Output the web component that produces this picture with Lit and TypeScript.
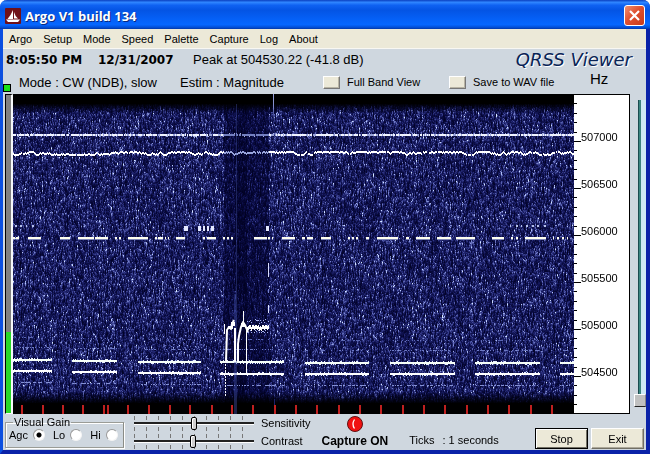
import { LitElement, html, css, svg } from "lit";
import { customElement, query } from "lit/decorators.js";

const MENU = ["Argo", "Setup", "Mode", "Speed", "Palette", "Capture", "Log", "About"];
const LABELS = ["507000", "506500", "506000", "505500", "505000", "504500"];

const PLOT_W = 561;
const PLOT_H = 320;

type Span = [number, number];

// Keyed carrier near 505.95 kHz: start and end of every mark.
const KEYING: Span[] = [
  [0, 2], [3, 6], [15, 28], [47, 57], [65, 81], [82, 95], [102, 104], [106, 108],
  [115, 135], [142, 144], [145, 150], [152, 153], [155, 156], [163, 172], [190, 192],
  [194, 203], [210, 212], [214, 216], [218, 220], [241, 254], [255, 257], [259, 260],
  [269, 282], [289, 292], [294, 300], [308, 318], [335, 337], [339, 341], [343, 345],
  [353, 356], [364, 385], [393, 396], [403, 417], [424, 438], [443, 462], [479, 491],
  [498, 500], [503, 505], [512, 533], [540, 541], [544, 546], [549, 551], [554, 555],
];
const UPPER_KEYING: Span[] = [
  [171, 175], [185, 188], [190, 192], [194, 196], [198, 201], [253, 256],
];
const FAINT_KEYING: Span[] = [
  [2, 4], [7, 9], [13, 14], [19, 21], [497, 498], [503, 505], [508, 509],
  [513, 515], [519, 521], [524, 526], [531, 533],
];
// Long dashes of the paired beacon: start, end, upper row, lower row.
const BEACON: [number, number, number, number][] = [
  [0, 39, 265, 276], [59, 104, 266, 277], [125, 188, 267, 278], [207, 271, 267, 279],
  [292, 356, 268, 279], [377, 442, 268, 279], [462, 527, 268, 279], [547, 561, 268, 279],
];
const TIME_TICKS = [
  8, 29, 49, 69, 90, 94, 114, 135, 156, 176, 198, 218, 239, 261,
  282, 303, 325, 346, 367, 389, 410, 431, 453, 474, 495, 517, 538,
];

function randomSource(seed: number) {
  return () => {
    seed = (seed + 0x6d2b79f5) | 0;
    let t = Math.imul(seed ^ (seed >>> 15), 1 | seed);
    t = (t + Math.imul(t ^ (t >>> 7), 61 | t)) ^ t;
    return ((t ^ (t >>> 14)) >>> 0) / 4294967296;
  };
}

@customElement("argo-waterfall")
export class ArgoWaterfall extends LitElement {
  static styles = css`
    :host { display: block; background: #000; min-width: 0; min-height: 0; contain: size; }
    .plot { display: block; width: 100%; height: 100%; }
  `;

  @query(".plot") canvas!: HTMLCanvasElement;

  firstUpdated() {
    const ctx = this.canvas.getContext("2d")!;
    const rnd = randomSource(1234);
    this.paintNoise(ctx, rnd);
    this.paintSignals(ctx, rnd);
  }

  private paintNoise(ctx: CanvasRenderingContext2D, rnd: () => number) {
    const image = ctx.createImageData(PLOT_W, PLOT_H);
    const previous = new Float32Array(PLOT_W);
    for (let y = 0; y < PLOT_H; y++) {
      const top = Math.min(1, Math.max(0, (y - 9) / 10));
      const bottom = Math.min(1, Math.max(0, (309 - y) / 12));
      const edge = top * bottom;
      for (let x = 0; x < PLOT_W; x++) {
        const fresh = -Math.log(1 - rnd() * 0.998) * 0.3;
        const level = previous[x] * 0.5 + fresh * 0.54;
        previous[x] = level;
        let gain = edge;
        if (x >= 211 && x < 256) gain *= x > 222 && x < 234 ? 0.35 : 0.55;
        const v = Math.min(1.1, level) * gain;
        const i = (y * PLOT_W + x) * 4;
        image.data[i] = v * v * 150 + v * 32;
        image.data[i + 1] = v * v * 155 + v * 42;
        image.data[i + 2] = edge * 28 + v * 220;
        image.data[i + 3] = 255;
      }
    }
    ctx.putImageData(image, 0, 0);
  }

  private paintSignals(ctx: CanvasRenderingContext2D, rnd: () => number) {
    const dot = (x: number, y: number, w: number, h: number, color: string) => {
      ctx.fillStyle = color;
      ctx.fillRect(x, y, w, h);
    };

    let drift = 0;
    for (let x = 0; x < PLOT_W; x++) {
      const dim = x >= 211 && x < 256;
      const a = rnd();
      if (a > 0.06) dot(x, 40, 1, 2, dim ? "#7480c0" : a > 0.3 ? "#f0f3ff" : "#98a2d8");
      if (rnd() > 0.85) dot(x, rnd() > 0.5 ? 39 : 42, 1, 1, "#a4aee0");
      drift = Math.max(-1, Math.min(2, drift + Math.round((rnd() - 0.5) * 3)));
      if (rnd() > 0.04) dot(x, 58 + drift, 1, 2, dim ? "#98a4dc" : "#fff");
    }

    for (const [a, b] of KEYING) {
      dot(a, 143, b - a, 2, "#fffff0");
      dot(a, 145, b - a, 1, "#8088b8");
    }
    for (const [a, b] of UPPER_KEYING) dot(a, 132, b - a, 5, "#e4e8ff");
    for (const [a, b] of FAINT_KEYING) dot(a, 131, b - a, 2, "#b5c0e8");

    for (const [a, b, upper, lower] of BEACON) {
      dot(a, upper, b - a, 2, "#f6fff8");
      dot(a, lower, b - a, 2, "#fff");
      for (let x = a; x < b; x++) {
        if (rnd() > 0.6) dot(x, upper + (rnd() > 0.5 ? 2 : -1), 1, 1, "#e8efff");
        if (rnd() > 0.6) dot(x, lower + (rnd() > 0.5 ? 2 : -1), 1, 1, "#e8efff");
        if (rnd() > 0.6) dot(x, upper - 12, 1, 1, "#6c78c4");
        if (rnd() > 0.45) dot(x, lower + 12, 1, 1, "#8490d4");
        if (rnd() > 0.75) dot(x, upper - 22, 1, 1, "#5a66b4");
      }
    }

    // Interference bursts that span the whole band.
    dot(223, 10, 1, 310, "rgba(70,84,170,0.4)");
    dot(221, 200, 2, 120, "rgba(70,84,180,0.4)");
    const burst = ctx.createLinearGradient(0, 0, 0, 30);
    burst.addColorStop(0, "#9aa4dc");
    burst.addColorStop(0.45, "#7d88cc");
    burst.addColorStop(1, "rgba(60,70,150,0)");
    ctx.fillStyle = burst;
    ctx.fillRect(260, 0, 1, 30);
    dot(261, 305, 1, 15, "#1c226c");
    dot(255, 169, 1, 14, "#d8dcff");
    dot(255, 195, 1, 4, "#7884cc");
    dot(255, 211, 1, 8, "#dfe3ff");

    // Tuning sweep.
    ctx.strokeStyle = "#fff";
    ctx.lineWidth = 2;
    ctx.lineJoin = "round";
    ctx.beginPath();
    ctx.moveTo(213, 268); ctx.lineTo(214, 236); ctx.lineTo(216, 233); ctx.lineTo(218, 235);
    ctx.lineTo(219, 230); ctx.lineTo(221, 226);
    ctx.moveTo(222, 268); ctx.lineTo(222, 234);
    ctx.moveTo(225, 268); ctx.lineTo(225, 250); ctx.lineTo(226, 242); ctx.lineTo(228, 233);
    ctx.lineTo(230, 228); ctx.lineTo(232, 231); ctx.lineTo(235, 238);
    ctx.stroke();
    ctx.lineWidth = 1;
    ctx.beginPath();
    ctx.moveTo(230.5, 232); ctx.lineTo(230.5, 217);
    ctx.moveTo(211.5, 230); ctx.lineTo(211.5, 240);
    ctx.moveTo(233.5, 236); ctx.lineTo(233.5, 281);
    ctx.stroke();
    dot(215, 232, 5, 3, "#fff");
    dot(218, 228, 4, 4, "#fff");
    dot(228, 229, 4, 4, "#fff");
    for (let y = 264; y < 302; y += 3) dot(212, y, 1, 2, "#f4f6ff");
    for (let x = 234; x < 256; x++) {
      const y = 232 + Math.round((rnd() - 0.5) * 3);
      dot(x, y, 1, 4, "#fff");
      if (rnd() > 0.3) dot(x, y - 4 - Math.floor(rnd() * 3), 1, 1, "#a4b0ee");
      if (rnd() > 0.4) dot(x, y + 5 + Math.floor(rnd() * 2), 1, 1, "#a4b0ee");
    }

    for (const x of TIME_TICKS) dot(x, 311, 2, 9, "#c02020");
  }

  render() {
    return html`<canvas class="plot" width=${PLOT_W} height=${PLOT_H} role="img" aria-label="Spectrum waterfall"></canvas>`;
  }
}

@customElement("argo-scale")
export class ArgoScale extends LitElement {
  static styles = css`
    :host {
      display: flex; flex-direction: column; background: #fff; color: #000;
      border: 1px solid #000; border-left: 0; font-size: 11px; line-height: 12px;
    }
    .band { flex: 47 1 0; min-height: 0; display: grid; grid-template-columns: 7px 1fr; }
    .rest { flex: 36 1 0; }
    .ticks { display: flex; flex-direction: column; min-height: 0; }
    .tick { flex: 1 1 0; width: 3px; border-bottom: 1px solid #000; box-sizing: border-box; }
    .major { width: 7px; }
    .blank { border-bottom: 0; }
    .label { align-self: end; margin-bottom: -1px; }
  `;

  render() {
    return html`
      ${LABELS.map((label) => html`
        <div class="band">
          <div class="ticks">
            ${[0, 1, 2, 3].map(() => html`<div class="tick"></div>`)}
            <div class="tick major"></div>
          </div>
          <span class="label">${label}</span>
        </div>`)}
      <div class="band rest">
        <div class="ticks">
          ${[0, 1, 2].map(() => html`<div class="tick"></div>`)}
          <div class="tick blank"></div>
        </div>
      </div>`;
  }
}

@customElement("app-root")
export class AppRoot extends LitElement {
  static styles = css`
    :host { display: block; font-family: "Liberation Sans", Arial, sans-serif; font-size: 11px; color: #000; }
    * { box-sizing: border-box; }
    .window {
      min-height: 100vh; display: flex; flex-direction: column;
      border: solid #0b4fe0; border-width: 0 4px 4px 3px;
      border-right-color: #0a22a8; border-bottom-color: #0a22a8;
      border-radius: 7px 7px 0 0; background: #cfd7df; white-space: nowrap;
    }
    .title {
      height: 29px; margin: 0 -4px 0 -3px; padding: 2px 5px 0; display: flex; align-items: center; gap: 4px;
      border-radius: 7px 7px 0 0;
      background: linear-gradient(#0a3fc0 0, #2f86ff 8%, #0f62f2 18%, #0454e4 35%, #0560f6 65%, #0667ff 85%, #0350d8 94%, #0238a8 100%);
    }
    .logo { width: 16px; height: 16px; }
    .caption {
      flex: 1; margin: 0; font: bold 13px/20px "Open Sans", "Noto Sans", sans-serif;
      color: #fff; text-shadow: 1px 1px #0a2a80;
    }
    .close { width: 21px; height: 21px; padding: 0; border: 1px solid #fff; border-radius: 3px; background: linear-gradient(135deg, #f09070, #df5030 45%, #c83a18); }
    .cross { display: block; width: 19px; height: 19px; }

    .menu { height: 20px; display: flex; align-items: center; gap: 11px; padding-left: 6px; background: #ece9d8; border-bottom: 1px solid #f8f7f2; }
    .item { border: 0; padding: 0; background: none; color: inherit; font: 11px/16px "Liberation Sans", Arial, sans-serif; }

    .info { height: 21px; display: grid; grid-template-columns: 92px 95px 1fr auto; align-items: center; padding: 0 14px 0 3px; font-size: 13px; }
    .strong { font: bold 12px/16px "DejaVu Sans", Verdana, sans-serif; }
    .brand { font: italic 18px/20px "DejaVu Sans", Verdana, sans-serif; color: #0a2456; text-shadow: 1px 1px #fff; }

    .modes { height: 24px; display: grid; grid-template-columns: 16px 161fr 143fr 126fr 141fr 56fr; align-items: center; font-size: 13px; }
    .lamp { align-self: end; width: 8px; height: 8px; margin-bottom: 2px; background: #18e018; border: 1px solid #000; }
    .switch { display: flex; align-items: center; gap: 7px; font-size: 11px; }
    .box { appearance: none; width: 17px; height: 13px; margin: 0; background: #ece9d8; border: 1px solid; border-color: #fff #777 #777 #fff; box-shadow: inset -1px -1px #b8b4a4; }
    .unit { font-size: 15px; line-height: 16px; padding-bottom: 7px; }

    .main { flex: 1 0 320px; display: grid; grid-template-columns: 10px 1fr 56px 16px; }
    .meter { margin-left: 2px; display: flex; flex-direction: column; justify-content: flex-end; background: #808080; border: solid; border-width: 1px 2px 1px 1px; border-color: #000 #f6f8fa #f6f8fa #000; }
    .level { background: #28d828; }
    .side { padding: 6px 0 7px 4px; display: flex; min-height: 0; }
    .vertical { appearance: none; writing-mode: vertical-lr; direction: rtl; width: 12px; height: auto; min-height: 0; margin: 0; background: none; }
    .vertical::-webkit-slider-runnable-track { width: 12px; background: linear-gradient(90deg, transparent 4px, #1c4c50 4px, #1c4c50 5px, #3c8480 5px, #3c8480 7px, #cde9f4 7px); }
    .vertical::-webkit-slider-thumb { appearance: none; width: 12px; height: 13px; background: #c0c0c0; border: 1px solid; border-color: #fff #888 #222 #fff; }

    .controls { min-height: 36px; display: flex; padding-right: 2px; }
    .group { align-self: flex-start; width: 119px; height: 31px; margin: 3px 0 0 2px; padding: 0 0 0 3px; border: 1px solid #9a9c96; border-right-color: #8a8c86; box-shadow: 1px 1px #fff, inset 1px 1px #fff; }
    .legend { padding: 0 1px; margin-left: 4px; line-height: 11px; height: 11px; }
    .choices { display: flex; align-items: center; gap: 8px; }
    .choice { display: flex; align-items: center; gap: 5px; line-height: 14px; }
    .radio { appearance: none; width: 12px; height: 12px; margin: 0; border: 1px solid; border-color: #999 #f4f4f4 #f4f4f4 #999; border-radius: 50%; background: #fff; }
    .radio:checked { background: radial-gradient(circle, #000 2px, #fff 3px); }

    .sliders { margin-left: 10px; display: grid; grid-template-columns: 120px auto; column-gap: 7px; grid-auto-rows: 18px; align-items: center; }
    .range {
      appearance: none; width: 120px; height: 15px; margin: 0;
      background:
        linear-gradient(transparent 4px, #cfd7df 4px, #cfd7df 11px, transparent 11px),
        repeating-linear-gradient(90deg, #777 0, #777 1px, transparent 1px, transparent 12px);
    }
    .range::-webkit-slider-runnable-track { height: 13px; background: linear-gradient(transparent 5px, #222 5px, #222 7px, #fff 7px, #fff 8px, transparent 8px); }
    .range::-webkit-slider-thumb { appearance: none; width: 6px; height: 13px; background: #d0d0d0; border: 1px solid #000; border-radius: 2px; box-shadow: inset 1px 1px #fff; }

    .capture { margin-left: 11px; display: flex; flex-direction: column; align-items: center; }
    .record { width: 18px; height: 18px; margin-top: 1px; }
    .state { font-weight: bold; font-size: 12px; line-height: 16px; }
    .speed { align-self: flex-end; margin: 0 0 2px 21px; line-height: 16px; display: flex; gap: 8px; }
    .actions { flex: 1; display: flex; justify-content: flex-end; align-items: flex-end; gap: 3px; padding-bottom: 1px; }
    .push { width: 53px; height: 21px; padding: 0; font: 11px/14px "Liberation Sans", Arial, sans-serif; color: #000; background: #ece9d8; border: 1px solid; border-color: #fff #716f64 #716f64 #fff; box-shadow: inset -1px -1px #aca899; }
    .default { border-color: #000; box-shadow: inset 1px 1px #fff, inset -1px -1px #716f64; }
  `;

  private logo() {
    return svg`<svg class="logo" viewBox="0 0 16 16" aria-hidden="true">
      <rect width="16" height="16" rx="1" fill="#701018"/>
      <path d="M8 2v9H2.500Q6 7 8 2zM9 4q1 4 4 6.500H9z" fill="#fff"/>
      <path d="M1 11.500h14l-2 2.500H3z" fill="#fff"/>
    </svg>`;
  }

  render() {
    return html`
      <div class="window">
        <header class="title">
          ${this.logo()}
          <h1 class="caption">Argo V1 build 134</h1>
          <button class="close" aria-label="Close">
            <svg class="cross" viewBox="0 0 19 19" aria-hidden="true"><path d="M5 5l9 9M14 5l-9 9" stroke="#fff" stroke-width="2.200"/></svg>
          </button>
        </header>
        <nav class="menu">${MENU.map((name) => html`<button class="item">${name}</button>`)}</nav>
        <div class="info">
          <span class="strong">8:05:50 PM</span>
          <span class="strong">12/31/2007</span>
          <span>Peak at 504530.22 (-41.8 dB)</span>
          <span class="brand">QRSS Viewer</span>
        </div>
        <div class="modes">
          <span class="lamp"></span>
          <span>Mode : CW (NDB), slow</span>
          <span>Estim : Magnitude</span>
          <label class="switch"><input class="box" type="checkbox">Full Band View</label>
          <label class="switch"><input class="box" type="checkbox">Save to WAV file</label>
          <span class="unit">Hz</span>
        </div>
        <main class="main">
          <div class="meter" role="meter" aria-label="Input level" aria-valuenow="25"><div class="level" style="height:25.5%"></div></div>
          <argo-waterfall></argo-waterfall>
          <argo-scale></argo-scale>
          <div class="side"><input class="vertical" type="range" min="0" max="100" value="0" aria-label="Frequency offset"></div>
        </main>
        <footer class="controls">
          <fieldset class="group">
            <legend class="legend">Visual Gain</legend>
            <div class="choices">
              ${["Agc", "Lo", "Hi"].map((name) => html`
                <label class="choice">${name}<input class="radio" type="radio" name="gain" ?checked=${name === "Agc"}></label>`)}
            </div>
          </fieldset>
          <div class="sliders">
            <input class="range" id="sensitivity" type="range" min="0" max="100" value="50"><label for="sensitivity">Sensitivity</label>
            <input class="range" id="contrast" type="range" min="0" max="100" value="49"><label for="contrast">Contrast</label>
          </div>
          <div class="capture">
            <svg class="record" viewBox="0 0 18 18" aria-hidden="true">
              <circle cx="9" cy="9" r="7.500" fill="#f01010" stroke="#601010"/>
              <path d="M8.500 4.500q-3 4.500 0 9" fill="none" stroke="#fff" stroke-width="1.300"/>
            </svg>
            <span class="state">Capture ON</span>
          </div>
          <div class="speed"><span>Ticks</span><span>: 1 seconds</span></div>
          <div class="actions">
            <button class="push default">Stop</button>
            <button class="push">Exit</button>
          </div>
        </footer>
      </div>`;
  }
}
